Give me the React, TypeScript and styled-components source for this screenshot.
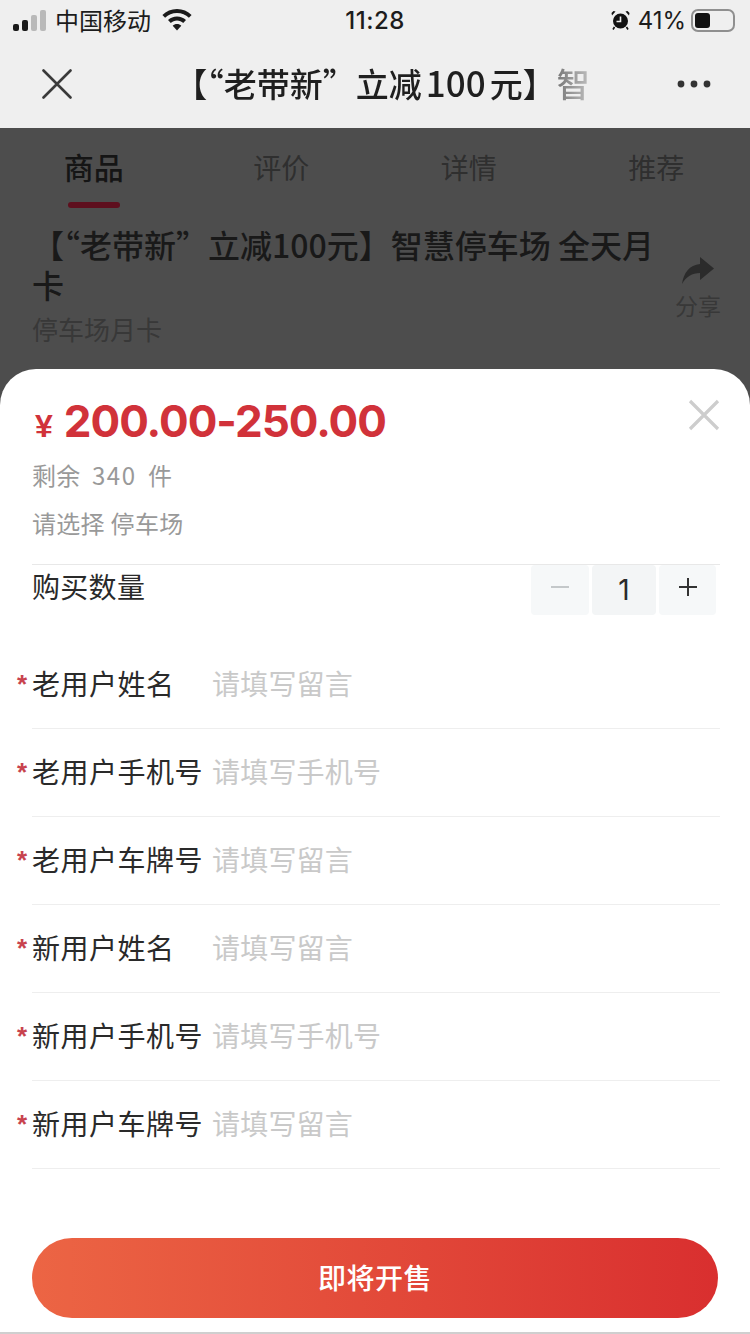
import React from "react";
import styled, { createGlobalStyle } from "styled-components";

const GlobalStyle = createGlobalStyle`
  html, body { margin: 0; padding: 0; }
  body { font-family: "Noto Sans CJK SC", "Noto Sans", sans-serif; background: #4d4d4d; }
  * { box-sizing: border-box; }
`;

const Page = styled.div`
  width: 750px;
  height: 1334px;
  display: flex;
  flex-direction: column;
  overflow: hidden;
  background: #4d4d4d;
`;

const TopArea = styled.header`
  height: 128px;
  background: #efefef;
  display: flex;
  flex-direction: column;
`;

const StatusBar = styled.div`
  height: 40px;
  padding: 0 13px;
  display: flex;
  align-items: center;
  justify-content: space-between;
  color: #1c1c1c;
  font-size: 24px;
`;

const StatusSide = styled.div<{ $end?: boolean }>`
  width: 250px;
  display: flex;
  align-items: center;
  gap: ${({ $end }) => ($end ? 10 : 9)}px;
  justify-content: ${({ $end }) => ($end ? "flex-end" : "flex-start")};
`;

const Carrier = styled.span`
  margin-top: -2px;
  margin-right: 2px;
`;

const Signal = styled.div`
  display: flex;
  align-items: flex-end;
  gap: 3px;
  height: 21px;
`;

const SignalBar = styled.i<{ $h: number; $on: boolean }>`
  display: block;
  width: 6px;
  height: ${({ $h }) => $h}px;
  border-radius: 2px;
  background: ${({ $on }) => ($on ? "#1a1a1a" : "#b9b9b9")};
`;

const Clock = styled.div`
  font-family: "Inter", sans-serif;
  font-weight: 500;
  letter-spacing: 0.5px;
`;

const Percent = styled.span`
  font-family: "Inter", sans-serif;
  font-size: 24px;
  margin-left: -2px;
  margin-right: -5px;
`;

const Battery = styled.div`
  width: 44px;
  height: 23px;
  padding: 2px;
  border: 2px solid #8f8f8f;
  border-radius: 7px;
  margin-right: 2px;
`;

const BatteryFill = styled.div`
  width: 15px;
  height: 15px;
  border-radius: 3px;
  background: #111;
`;

const NavBar = styled.div`
  flex: 1;
  padding: 0 38px 0 42px;
  display: flex;
  align-items: center;
  justify-content: space-between;
`;

const NavTitle = styled.div`
  margin: -5px -8px 0 8px;
  white-space: nowrap;
  font-size: 33px;
  font-weight: 500;
  color: #1f1f1f;
  -webkit-mask-image: linear-gradient(to right, #000 92%, rgba(0, 0, 0, 0.4) 100%);
  mask-image: linear-gradient(to right, #000 92%, rgba(0, 0, 0, 0.4) 100%);
`;

const NavNumber = styled.span`
  font-size: 35px;
  margin: 0 4px;
`;

const NavLast = styled.span`
  margin-left: 1px;
  color: #777;
`;

const Product = styled.section`
  height: 241px;
  color: #1a1a1a;
`;

const Tabs = styled.div`
  height: 81px;
  display: grid;
  grid-template-columns: repeat(4, 1fr);
`;

const Tab = styled.div<{ $active?: boolean }>`
  position: relative;
  padding-top: ${({ $active }) => ($active ? 18 : 19)}px;
  text-align: center;
  font-size: ${({ $active }) => ($active ? 30 : 28)}px;
  line-height: 40px;
  font-weight: ${({ $active }) => ($active ? 500 : 400)};
  color: ${({ $active }) => ($active ? "#151515" : "#2f2f2f")};
`;

const TabMark = styled.i`
  position: absolute;
  left: 68px;
  top: 74px;
  width: 52px;
  height: 6px;
  border-radius: 3px;
  background: #5e0f1e;
`;

const ProductBody = styled.div`
  display: flex;
  padding-left: 32px;
`;

const ProductText = styled.div`
  width: 630px;
`;

const ProductTitle = styled.h1`
  margin: 15px 0 0;
  font-size: 32px;
  line-height: 40px;
  font-weight: 500;
  color: #191919;
`;

const ProductSub = styled.div`
  margin-top: 7px;
  font-size: 26px;
  line-height: 36px;
  color: #383838;
`;

const Share = styled.div`
  margin: 48px 0 0 13px;
  width: 46px;
  display: flex;
  flex-direction: column;
  align-items: center;
  font-size: 23px;
  line-height: 42px;
  white-space: nowrap;
  color: #383838;
`;

const Sheet = styled.section`
  flex: 1;
  position: relative;
  background: #fff;
  border-radius: 36px 36px 0 0;
  padding: 24px 32px 0;
  display: flex;
  flex-direction: column;
  border-bottom: 2px solid #cfcfcf;
`;

const CloseBtn = styled.div`
  position: absolute;
  top: 30px;
  right: 30px;
  line-height: 0;
`;

const Price = styled.div`
  display: flex;
  align-items: baseline;
  color: #d1323a;
  height: 56px;
  line-height: 56px;
`;

const Yen = styled.span`
  font-family: "Liberation Sans", sans-serif;
  font-size: 32px;
  font-weight: 700;
  margin: 0 11px 0 3px;
`;

const Amount = styled.span`
  font-family: "Inter", sans-serif;
  font-size: 44px;
  font-weight: 700;
  letter-spacing: -1px;
`;

const Muted = styled.div<{ $top: number }>`
  margin-top: ${({ $top }) => $top}px;
  font-size: 24px;
  line-height: 36px;
  color: #999;
  letter-spacing: 0.3px;
  white-space: pre;
`;

const Count = styled.span`
  letter-spacing: 1.6px;
`;

const Quantity = styled.div`
  margin: 23px -2px 0 0;
  height: 51px;
  border-top: 1px solid #e8e8e8;
  display: flex;
  justify-content: space-between;
`;

const QuantityLabel = styled.div`
  font-size: 28px;
  line-height: 42px;
  letter-spacing: 0.3px;
  color: #2a2a2a;
`;

const Stepper = styled.div`
  display: flex;
  gap: 3px;
  margin-right: 4px;
`;

const StepCell = styled.div<{ $w: number; $muted?: boolean }>`
  width: ${({ $w }) => $w}px;
  height: 50px;
  padding-bottom: ${({ $muted }) => ($muted ? 6 : 0)}px;
  border-radius: 4px;
  background: ${({ $muted }) => ($muted ? "#f6f8f9" : "#f3f5f6")};
  display: flex;
  align-items: center;
  justify-content: center;
  font-family: "Inter", sans-serif;
  font-size: 28px;
  color: #2a2a2a;
`;

const Fields = styled.div`
  margin: 26px -2px 0 0;
  display: flex;
  flex-direction: column;
`;

const Field = styled.div`
  position: relative;
  height: 88px;
  padding-bottom: 3px;
  display: flex;
  align-items: center;
  border-bottom: 1px solid #eee;
  font-size: 28px;
`;

const Star = styled.span`
  position: absolute;
  left: -15px;
  top: 29px;
  color: #c8434e;
  font-family: "Liberation Sans", sans-serif;
  font-size: 26px;
  font-weight: 700;
  line-height: 28px;
`;

const FieldLabel = styled.label`
  width: 180px;
  flex: none;
  letter-spacing: 0.5px;
  color: #2a2a2a;
`;

const FieldHint = styled.span`
  color: #c9c9c9;
  letter-spacing: 0.2px;
`;

const Buy = styled.button`
  margin-top: 69px;
  width: 686px;
  height: 80px;
  padding: 0 0 3px;
  border: none;
  border-radius: 40px;
  background: linear-gradient(to right, #ec6544, #d92f2f);
  color: #fff;
  font-family: inherit;
  font-size: 28px;
  font-weight: 500;
  letter-spacing: 0.5px;
`;

const fields = [
  ["老用户姓名", "请填写留言"],
  ["老用户手机号", "请填写手机号"],
  ["老用户车牌号", "请填写留言"],
  ["新用户姓名", "请填写留言"],
  ["新用户手机号", "请填写手机号"],
  ["新用户车牌号", "请填写留言"],
];

const Wifi = () => (
  <svg width="30" height="22" viewBox="0 0 30 22" fill="#1a1a1a">
    <path d="M15 0C9.3 0 4.2 2.2 0.4 5.9l2.7 2.9C6.2 5.8 10.4 4 15 4s8.8 1.8 11.9 4.8l2.7-2.9C25.8 2.2 20.7 0 15 0z" />
    <path d="M15 7.5c-3.5 0-6.6 1.4-9 3.6l2.8 2.9c1.6-1.5 3.8-2.5 6.2-2.5s4.6 1 6.2 2.5l2.8-2.9c-2.4-2.2-5.5-3.6-9-3.6z" />
    <path d="M15 15c-1.7 0-3.2.7-4.3 1.7L15 21.5l4.3-4.8C18.2 15.7 16.7 15 15 15z" />
  </svg>
);

const Alarm = () => (
  <svg width="19" height="20" viewBox="0 0 19 20">
    <circle cx="9.5" cy="11" r="7.5" fill="#111" />
    <path d="M1 5.5 4.5 1.5 2.5 1 0.5 3zM18 5.5 14.5 1.5 16.5 1 18.5 3z" fill="#111" />
    <path d="M3.5 17 2 19.5M15.5 17 17 19.5" stroke="#111" strokeWidth="1.6" />
    <path d="M9.5 6.5V11.5H5.5" stroke="#efefef" strokeWidth="1.6" fill="none" />
  </svg>
);

const NavClose = () => (
  <svg width="30" height="30" viewBox="0 0 30 30" stroke="#3a3a3a" strokeWidth="2.6" strokeLinecap="round">
    <path d="M1.5 1.5 28.5 28.5M28.5 1.5 1.5 28.5" />
  </svg>
);

const NavMore = () => (
  <svg width="36" height="10" viewBox="0 0 36 10" fill="#333">
    <circle cx="5" cy="5" r="3.4" />
    <circle cx="18" cy="5" r="3.4" />
    <circle cx="31" cy="5" r="3.4" />
  </svg>
);

const ShareArrow = () => (
  <svg width="32" height="27" viewBox="0 0 32 27" fill="#2b2b2b">
    <path d="M18 0 32 11.5 18 23V16C10 16 4.5 19.5 0 27 1.5 16 7.5 8 18 7z" />
  </svg>
);

const SheetClose = () => (
  <svg width="32" height="32" viewBox="0 0 32 32" stroke="#cdcdcd" strokeWidth="3.2">
    <path d="M2 2 30 30M30 2 2 30" />
  </svg>
);

const StepIcon = ({ plus, color }: { plus?: boolean; color: string }) => (
  <svg width="20" height="20" viewBox="0 0 20 20" stroke={color} strokeWidth="2">
    <path d="M1 10H19" />
    {plus && <path d="M10 1V19" />}
  </svg>
);

export default function App() {
  return (
    <Page lang="zh-CN">
      <GlobalStyle />
      <TopArea>
        <StatusBar>
          <StatusSide>
            <Signal>
              <SignalBar $h={7} $on />
              <SignalBar $h={11} $on />
              <SignalBar $h={16} $on={false} />
              <SignalBar $h={21} $on={false} />
            </Signal>
            <Carrier>中国移动</Carrier>
            <Wifi />
          </StatusSide>
          <Clock>11:28</Clock>
          <StatusSide $end>
            <Alarm />
            <Percent>41%</Percent>
            <Battery>
              <BatteryFill />
            </Battery>
          </StatusSide>
        </StatusBar>
        <NavBar>
          <NavClose />
          <NavTitle>
            【“老带新”立减<NavNumber>100</NavNumber>元】<NavLast>智</NavLast>
          </NavTitle>
          <NavMore />
        </NavBar>
      </TopArea>

      <Product>
        <Tabs>
          <Tab $active>
            商品
            <TabMark />
          </Tab>
          <Tab>评价</Tab>
          <Tab>详情</Tab>
          <Tab>推荐</Tab>
        </Tabs>
        <ProductBody>
          <ProductText>
            <ProductTitle>【“老带新”立减100元】智慧停车场 全天月卡</ProductTitle>
            <ProductSub>停车场月卡</ProductSub>
          </ProductText>
          <Share>
            <ShareArrow />
            分享
          </Share>
        </ProductBody>
      </Product>

      <Sheet>
        <CloseBtn>
          <SheetClose />
        </CloseBtn>
        <Price>
          <Yen>¥</Yen>
          <Amount>200.00-250.00</Amount>
        </Price>
        <Muted $top={8}>
          剩余  <Count>340</Count>  件
        </Muted>
        <Muted $top={12}>请选择 停车场</Muted>
        <Quantity>
          <QuantityLabel>购买数量</QuantityLabel>
          <Stepper>
            <StepCell $w={58} $muted>
              <StepIcon color="#c4c8ca" />
            </StepCell>
            <StepCell $w={64}>1</StepCell>
            <StepCell $w={57} $muted>
              <StepIcon plus color="#333" />
            </StepCell>
          </Stepper>
        </Quantity>
        <Fields>
          {fields.map(([label, hint]) => (
            <Field key={label}>
              <Star>*</Star>
              <FieldLabel>{label}</FieldLabel>
              <FieldHint>{hint}</FieldHint>
            </Field>
          ))}
        </Fields>
        <Buy>即将开售</Buy>
      </Sheet>
    </Page>
  );
}
